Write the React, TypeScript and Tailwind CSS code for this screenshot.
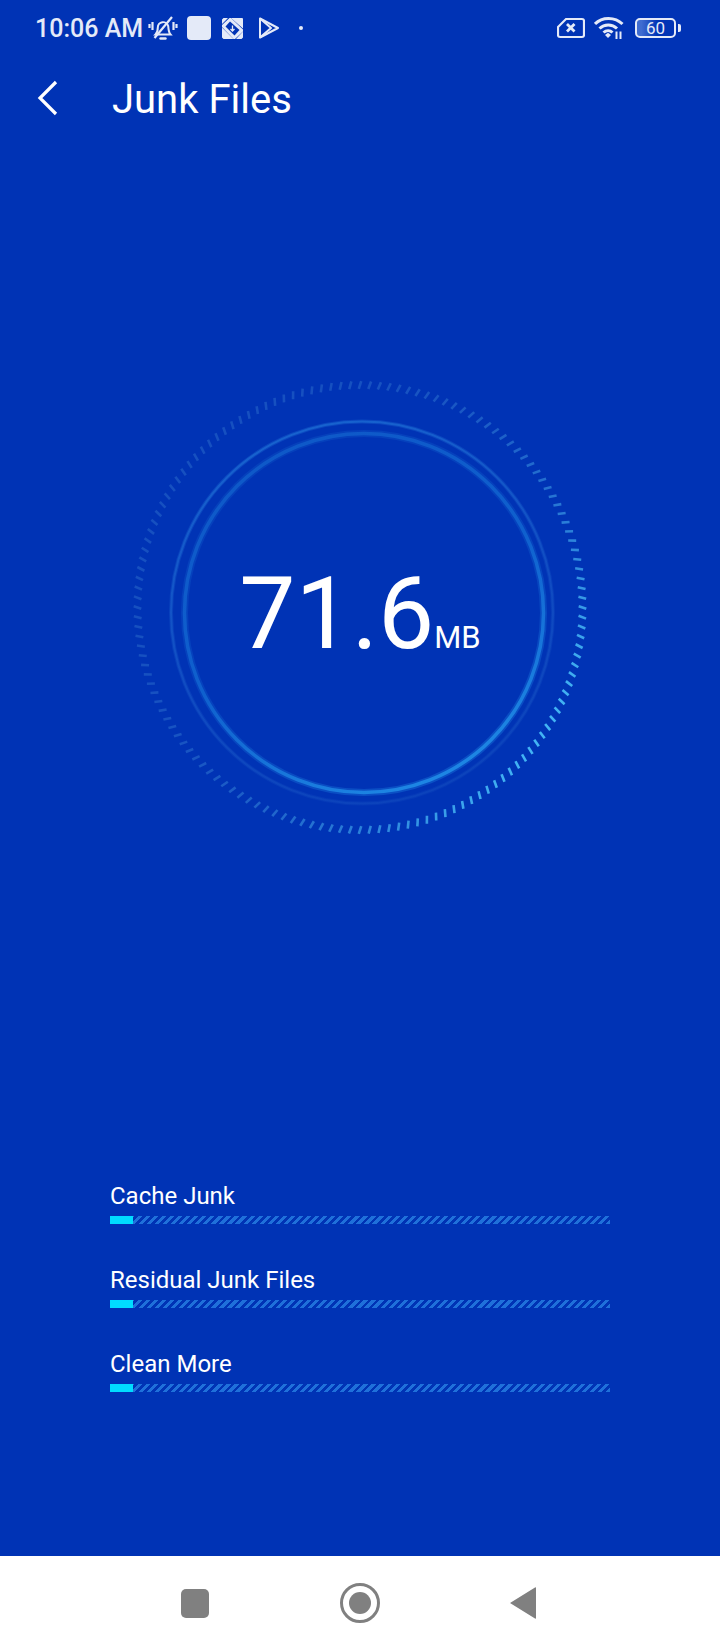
const rows = ["Cache Junk", "Residual Junk Files", "Clean More"];

function tickColor(deg: number) {
  // brightest toward the lower right, fading round to the upper left
  const a = ((deg - 125) * Math.PI) / 180;
  const t = (Math.cos(a) + 1) / 2;
  const from = [22, 80, 192];
  const to = [66, 180, 244];
  const c = from.map((v, i) => Math.round(v + (to[i] - v) * t * t * t));
  return `rgb(${c[0]},${c[1]},${c[2]})`;
}

function Dial() {
  const ticks = Array.from({ length: 144 }, (_, i) => i * 2.5);
  return (
    <svg width="460" height="460" viewBox="0 0 460 460" fill="none">
      <defs>
        <linearGradient id="outerRing" x1="0.35" y1="0" x2="0.65" y2="1">
          <stop offset="0" stopColor="#1763cf" />
          <stop offset="0.55" stopColor="#104cc2" />
          <stop offset="1" stopColor="#0b42bb" />
        </linearGradient>
        <linearGradient id="innerRing" x1="0.25" y1="0" x2="0.75" y2="1">
          <stop offset="0" stopColor="#0e58c8" />
          <stop offset="0.5" stopColor="#0f60ce" />
          <stop offset="1" stopColor="#1f8ae6" />
        </linearGradient>
      </defs>
      {ticks.map((deg) => (
        <line
          key={deg}
          x1="230"
          y1="3"
          x2="230"
          y2="11"
          stroke={tickColor(deg)}
          strokeWidth="2.600"
          transform={`rotate(${deg} 230 229.500) rotate(18 230 7)`}
        />
      ))}
      <circle cx="232" cy="234.500" r="191" stroke="url(#outerRing)" strokeWidth="4" opacity="0.45" />
      <circle cx="232" cy="234.500" r="191" stroke="url(#outerRing)" strokeWidth="2" />
      <circle cx="234" cy="235" r="179.500" stroke="url(#innerRing)" strokeWidth="7" opacity="0.35" />
      <circle cx="234" cy="235" r="179.500" stroke="url(#innerRing)" strokeWidth="3.500" />
    </svg>
  );
}

function StatusIcons() {
  return (
    <div className="flex items-center">
      <svg width="30" height="26" viewBox="0 0 30 26" fill="none" stroke="#e4eaf8" strokeWidth="2" className="ml-[5px]">
        <path d="M7.500 19.500c1.800-1.800 2.300-3.500 2.300-7a5.300 5.300 0 0 1 10.400-1.500c.3 3.500.5 6.500 2.300 8.500z" />
        <path d="M12.500 23.500h5" strokeWidth="2.400" strokeLinecap="round" />
        <path d="M6.500 23 24 2" strokeWidth="2.200" />
        <path d="M4.500 7v8M1.500 9v4M25.500 7v8M28.500 9v4" strokeWidth="2.200" />
      </svg>
      <div className="ml-[9px] h-6 w-6 rounded-[4px] bg-[#e4eaf8]" />
      <svg width="23" height="23" viewBox="0 0 23 23" className="ml-[10px]">
        <path d="M1 2.500 2.500 1H7L1 7zM10 1h11.500L22 2v9.500zM1 10.500 12.500 22H2.500L1 20.500zM22 14.500V20.500L20.500 22H15z" fill="#e4eaf8" />
        <path d="M8.500 1h1.500L22 12.500v2L14 22h-1.500L1 10V8z" fill="#e4eaf8" />
        <path d="M9 4.500 18.500 13l-5 5.500L4.500 9.500z" fill="#0033b5" />
        <path d="M11.500 8.500v5M9.500 12l2 2 2-2" stroke="#e4eaf8" strokeWidth="1.300" fill="none" />
      </svg>
      <svg width="22" height="24" viewBox="0 0 22 24" fill="none" stroke="#e4eaf8" strokeWidth="2" strokeLinejoin="round" className="ml-[14px]">
        <path d="M2 2.500 20 12 2 21.500z" />
        <path d="M2 2.500 13 12 2 21.500" />
      </svg>
      <div className="ml-[19px] h-[4px] w-[4px] rounded-full bg-[#e4eaf8]" />
    </div>
  );
}

function SystemIcons() {
  return (
    <div className="flex items-center">
      <svg width="28" height="22" viewBox="0 0 28 22" fill="none">
        <path d="M9 2h16a2 2 0 0 1 2 2v14a2 2 0 0 1-2 2H3a2 2 0 0 1-2-2V10z" stroke="#e4eaf8" strokeWidth="2.200" />
        <path d="M10 7l7.500 7.500M17.500 7 10 14.500" stroke="#e4eaf8" strokeWidth="2.800" />
      </svg>
      <svg width="30" height="24" viewBox="0 0 30 24" fill="none" stroke="#e4eaf8" strokeWidth="3" className="ml-[9px]">
        <path d="M1 8C8 .5 21 .5 28.500 8" />
        <path d="M5.500 12.500c5-4.800 12.500-4.800 17.500 0" />
        <path d="M9.500 16.500c2.800-2.500 6.500-2.500 9 0" />
        <path d="M11 19l3-2.200 3 2.200-3 3z" fill="#e4eaf8" stroke="none" />
        <path d="M22.500 15.500v7.500M26.500 15.500v7.500" strokeWidth="2" />
      </svg>
      <div className="relative ml-[11px] flex h-5 w-[41px] items-center justify-center rounded-[5px] border-2 border-[#e4eaf8] bg-[linear-gradient(90deg,#3f6cd0_0%,#3f6cd0_12%,#0033b5_55%)]">
        <span className="text-[17px] leading-none text-[#e4eaf8]">60</span>
      </div>
      <div className="ml-[2px] h-2 w-[3px] rounded-r-[2px] bg-[#e4eaf8]" />
    </div>
  );
}

export default function App() {
  return (
    <div className="flex h-[1650px] w-[720px] flex-col overflow-hidden bg-white font-['Roboto',sans-serif]">
      <div className="flex h-[1556px] flex-col bg-[#0033b5] text-white">
        <div className="flex h-[56px] items-center justify-between pr-[39px] pl-[35px]">
          <div className="flex items-center">
            <span className="text-[25px] leading-none font-medium text-[#e4eaf8]">10:06 AM</span>
            <StatusIcons />
          </div>
          <SystemIcons />
        </div>

        <div className="flex h-[84px] items-center pl-[36px]">
          <svg width="24" height="36" viewBox="0 0 24 36" fill="none" stroke="white" strokeWidth="3.200">
            <path d="M20 2 4 18l16 16" />
          </svg>
          <h1 className="ml-[52px] pt-[3px] text-[40px] leading-none font-normal">Junk Files</h1>
        </div>

        <div className="relative mt-[238px] flex h-[460px] items-center justify-center">
          <Dial />
          <div className="absolute inset-0 flex items-center justify-center">
            <div className="flex items-baseline pt-[12px]">
              <span className="text-[100px] leading-none">71.6</span>
              <span className="text-[31px] leading-none">MB</span>
            </div>
          </div>
        </div>

        <div className="mt-[345px] flex flex-col gap-[43px] px-[110px]">
          {rows.map((label) => (
            <div key={label} className="flex flex-col gap-[6px]">
              <span className="h-[27px] text-[24px] leading-[27px]">{label}</span>
              <div className="h-2 bg-[repeating-linear-gradient(-45deg,#1f70da_0,#1f70da_3px,transparent_3px,transparent_5.700px)]">
                <div className="h-full w-[23px] bg-[#00dcff]" />
              </div>
            </div>
          ))}
        </div>
      </div>

      <div className="flex h-[94px] items-center pl-[181px]">
        <div className="h-[29px] w-[28px] rounded-[5px] bg-[#808080]" />
        <div className="ml-[131px] flex h-10 w-10 items-center justify-center rounded-full border-[3px] border-[#808080]">
          <div className="h-[22px] w-[22px] rounded-full bg-[#808080]" />
        </div>
        <svg width="28" height="34" viewBox="0 0 28 34" className="ml-[129px]">
          <path d="M1 17 26 1.500c.6-.4 1-.1 1 .5v30c0 .6-.4.900-1 .5z" fill="#808080" />
        </svg>
      </div>
    </div>
  );
}
